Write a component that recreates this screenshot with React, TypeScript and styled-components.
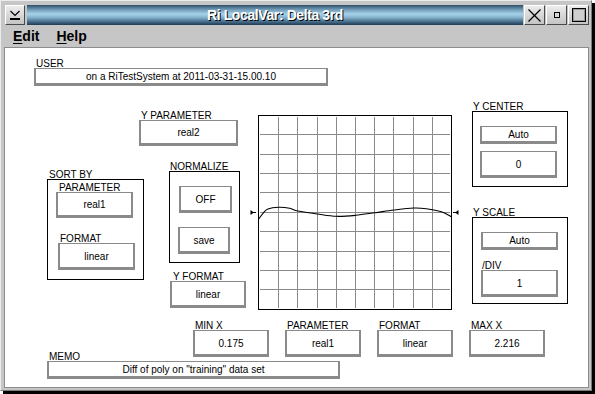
import React from "react";
import styled, { createGlobalStyle } from "styled-components";

const GlobalStyle = createGlobalStyle`
  html, body { margin: 0; padding: 0; background: #ffffff; }
  body { font-family: "Liberation Sans", Arial, sans-serif; color: #000; }
  #root { width: 595px; height: 394px; overflow: hidden; }
`;

const Window = styled.div`
  box-sizing: border-box;
  width: 592px;
  height: 391px;
  display: flex;
  flex-direction: column;
  background: #c6c6c6;
  border-top: 1px solid #ececec;
  border-left: 1px solid #ececec;
  border-right: 1px solid #7a7a7a;
  border-bottom: 1px solid #7a7a7a;
  padding: 4px 2px 2px 3px;
  box-shadow: 3px 3px 0 #000;
`;

const TitleRow = styled.div`
  display: flex;
  height: 20px;
  padding-left: 1px;
  flex: none;
`;

const WinButton = styled.div<{ $w: number }>`
  box-sizing: border-box;
  width: ${(p) => p.$w}px;
  height: 20px;
  flex: none;
  display: flex;
  align-items: center;
  justify-content: center;
  background: linear-gradient(#ececec, #c4c4c4);
  border: 1px solid;
  border-color: #ffffff #4a4a4a #4a4a4a #ffffff;
`;

const WinButtons = styled.div`
  display: flex;
  gap: 1px;
  margin-left: 1px;
`;

const TitleBar = styled.div`
  flex: 1;
  margin-left: 2px;
  height: 20px;
  display: flex;
  align-items: center;
  justify-content: center;
  background: linear-gradient(
    to bottom,
    #2e4e66 0%,
    #6e98b4 22%,
    #a6d2ea 45%,
    #86b2cc 62%,
    #4a7290 82%,
    #1e3a52 100%
  );
  color: #ffffff;
  font-weight: bold;
  font-size: 14px;
  letter-spacing: -0.4px;
  text-shadow: 1px 1px 0 #000;
  white-space: nowrap;
`;

const MenuBar = styled.div`
  height: 22px;
  flex: none;
  display: flex;
  align-items: center;
  padding-left: 9px;
  gap: 17px;
`;

const MenuItem = styled.span`
  font-weight: bold;
  font-size: 14px;
  line-height: 22px;
  u {
    text-decoration: underline;
    text-underline-offset: 2px;
    text-decoration-thickness: 1px;
  }
`;

const Content = styled.div`
  flex: 1;
  min-height: 0;
  background: #ffffff;
  border: 1px solid #8c8c8c;
  display: flex;
  flex-direction: column;
  align-items: flex-start;
  overflow: hidden;
`;

const Stack = styled.div<{ $mt?: number; $ml?: number; $w?: number }>`
  display: flex;
  flex-direction: column;
  align-items: flex-start;
  flex: none;
  margin-top: ${(p) => p.$mt ?? 0}px;
  margin-left: ${(p) => p.$ml ?? 0}px;
  ${(p) => (p.$w ? `width: ${p.$w}px;` : "")}
`;

const Label = styled.div<{ $indent?: number }>`
  font-size: 10px;
  line-height: 9px;
  height: 9px;
  padding-left: ${(p) => p.$indent ?? 2}px;
  white-space: nowrap;
`;

const ValueBox = styled.div<{ $w: number; $h?: number; $mt?: number; $ml?: number }>`
  box-sizing: border-box;
  flex: none;
  width: ${(p) => p.$w}px;
  height: ${(p) => p.$h ?? 27}px;
  margin-top: ${(p) => p.$mt ?? 0}px;
  margin-left: ${(p) => p.$ml ?? 0}px;
  background: #ffffff;
  border-style: solid;
  border-color: #8a8a8a;
  border-width: 1px 2px 3px 2px;
  display: flex;
  align-items: center;
  justify-content: center;
  padding-top: 2px;
  font-size: 10px;
  line-height: 10px;
  white-space: nowrap;
`;

const GroupBox = styled.div<{ $w: number; $h: number; $pt: number }>`
  box-sizing: border-box;
  width: ${(p) => p.$w}px;
  height: ${(p) => p.$h}px;
  border: 1px solid #000;
  padding-top: ${(p) => p.$pt}px;
  display: flex;
  flex-direction: column;
  align-items: flex-start;
`;

const MainRow = styled.div`
  display: flex;
  align-items: flex-start;
  margin-top: 16px;
  padding-left: 42px;
`;

const GraphWrap = styled.div`
  display: flex;
  align-items: center;
  margin-left: 4px;
  margin-top: 13px;
  flex: none;
`;

const Marker = styled.svg<{ $side: "left" | "right" }>`
  display: block;
  flex: none;
  ${(p) => (p.$side === "left" ? "margin-right: 2px;" : "margin-left: 1px;")}
`;

const BottomRow = styled.div`
  display: flex;
  gap: 16px;
  margin-top: 11px;
  margin-left: 188px;
`;

type FieldProps = {
  label: string;
  value: string;
  w: number;
  h?: number;
  mt?: number;
  ml?: number;
  indent?: number;
};

function Field({ label, value, w, h, mt, ml, indent }: FieldProps) {
  return (
    <Stack $mt={mt} $ml={ml}>
      <Label $indent={indent}>{label}</Label>
      <ValueBox $w={w} $h={h}>
        {value}
      </ValueBox>
    </Stack>
  );
}

const curvePts: [number, number][] = [
  [0, 105],
  [5, 98.3],
  [10, 94],
  [20.7, 92.3],
  [31.7, 93.3],
  [40, 96],
  [59.4, 99],
  [78.4, 101.3],
  [97.7, 100.3],
  [117, 97.7],
  [136, 95],
  [155.4, 93],
  [168.4, 93.7],
  [183.4, 96.7],
  [193.5, 101.7],
];

function smoothPath(pts: [number, number][]) {
  let d = `M${pts[0][0]},${pts[0][1]}`;
  for (let i = 0; i < pts.length - 1; i++) {
    const p0 = pts[i - 1] || pts[i];
    const p1 = pts[i];
    const p2 = pts[i + 1];
    const p3 = pts[i + 2] || p2;
    const c1x = p1[0] + (p2[0] - p0[0]) / 6;
    const c1y = p1[1] + (p2[1] - p0[1]) / 6;
    const c2x = p2[0] - (p3[0] - p1[0]) / 6;
    const c2y = p2[1] - (p3[1] - p1[1]) / 6;
    d += ` C${c1x.toFixed(2)},${c1y.toFixed(2)} ${c2x.toFixed(2)},${c2y.toFixed(2)} ${p2[0]},${p2[1]}`;
  }
  return d;
}

const vLines = [20, 39, 59, 78, 97, 116, 135, 155, 174];
const hLines = [19, 39, 58, 77, 97, 116, 136, 155, 174];

function Graph() {
  return (
    <svg width={194} height={195} style={{ display: "block", flex: "none" }}>
      <rect x={0} y={0} width={194} height={195} fill="#fff" />
      <g stroke="#8a8a8a" strokeWidth={1} shapeRendering="crispEdges">
        {vLines.map((x) => (
          <line key={"v" + x} x1={x + 0.5} y1={2} x2={x + 0.5} y2={193} />
        ))}
        {hLines.map((y) => (
          <line key={"h" + y} x1={2} y1={y + 0.5} x2={192} y2={y + 0.5} />
        ))}
      </g>
      <rect
        x={0.5}
        y={0.5}
        width={193}
        height={194}
        fill="none"
        stroke="#000"
        strokeWidth={1}
        shapeRendering="crispEdges"
      />
      <path d={smoothPath(curvePts)} fill="none" stroke="#000" strokeWidth={1.1} />
    </svg>
  );
}

function LeftMarker() {
  return (
    <Marker $side="left" width={6} height={7} viewBox="0 0 6 7">
      <polygon points="0.5,1 4,3.5 0.5,6" fill="#000" />
      <line x1={3} y1={3.5} x2={6} y2={3.5} stroke="#000" strokeWidth={1} />
    </Marker>
  );
}

function RightMarker() {
  return (
    <Marker $side="right" width={6} height={7} viewBox="0 0 6 7">
      <polygon points="5.5,1 2,3.5 5.5,6" fill="#000" />
      <line x1={0} y1={3.5} x2={3} y2={3.5} stroke="#000" strokeWidth={1} />
    </Marker>
  );
}

export default function App() {
  return (
    <>
      <GlobalStyle />
      <Window>
        <TitleRow>
          <WinButton $w={20}>
            <svg width={14} height={14} viewBox="0 0 14 14">
              <polyline points="2.5,3 7,7.5 11.5,3" fill="none" stroke="#000" strokeWidth={1.2} />
              <rect x={2} y={10} width={10} height={2} fill="#000" />
            </svg>
          </WinButton>
          <TitleBar>Ri LocalVar: Delta 3rd</TitleBar>
          <WinButtons>
            <WinButton $w={21}>
              <svg width={13} height={13} viewBox="0 0 13 13">
                <line x1={0.5} y1={0.5} x2={12.5} y2={12.5} stroke="#000" strokeWidth={1.2} />
                <line x1={12.5} y1={0.5} x2={0.5} y2={12.5} stroke="#000" strokeWidth={1.2} />
              </svg>
            </WinButton>
            <WinButton $w={21}>
              <svg width={6} height={6} viewBox="0 0 6 6">
                <rect x={0.5} y={0.5} width={5} height={5} fill="#d8d8d8" stroke="#000" strokeWidth={1} />
              </svg>
            </WinButton>
            <WinButton $w={21}>
              <svg width={14} height={14} viewBox="0 0 14 14">
                <rect x={0.5} y={0.5} width={13} height={13} fill="#d0d0d0" stroke="#000" strokeWidth={1} />
                <rect x={1.5} y={1.5} width={11} height={11} fill="none" stroke="#9a9a9a" strokeWidth={1} />
              </svg>
            </WinButton>
          </WinButtons>
        </TitleRow>
        <MenuBar>
          <MenuItem>
            <u>E</u>dit
          </MenuItem>
          <MenuItem>
            <u>H</u>elp
          </MenuItem>
        </MenuBar>
        <Content>
          <Field
            label="USER"
            value="on a RiTestSystem at 2011-03-31-15.00.10"
            w={294}
            h={18}
            mt={11}
            ml={29}
          />
          <MainRow>
            <Stack $mt={68} $w={97}>
              <Label $indent={2}>SORT BY</Label>
              <GroupBox $w={97} $h={101} $pt={3}>
                <Field label="PARAMETER" value="real1" w={77} h={26} ml={8} indent={3} />
                <Field label="FORMAT" value="linear" w={77} mt={16} ml={10} indent={2} />
              </GroupBox>
            </Stack>
            <Stack $ml={25} $w={77}>
              <Field label="Y PARAMETER" value="real2" w={99} h={26} mt={9} ml={-30} />
              <Stack $mt={16}>
                <Label $indent={1}>NORMALIZE</Label>
                <GroupBox $w={71} $h={92} $pt={14}>
                  <ValueBox $w={53} $ml={9}>
                    OFF
                  </ValueBox>
                  <ValueBox $w={52} $mt={14} $ml={8}>
                    save
                  </ValueBox>
                </GroupBox>
              </Stack>
              <Field label="Y FORMAT" value="linear" w={76} mt={9} ml={1} indent={3} />
            </Stack>
            <GraphWrap>
              <LeftMarker />
              <Graph />
              <RightMarker />
            </GraphWrap>
            <Stack $ml={13} $w={97}>
              <Label $indent={1}>Y CENTER</Label>
              <GroupBox $w={96} $h={76} $pt={14}>
                <ValueBox $w={77} $h={18} $ml={7}>
                  Auto
                </ValueBox>
                <ValueBox $w={77} $mt={7} $ml={7}>
                  0
                </ValueBox>
              </GroupBox>
              <Stack $mt={21}>
                <Label $indent={1}>Y SCALE</Label>
                <GroupBox $w={96} $h={87} $pt={14}>
                  <ValueBox $w={77} $h={18} $ml={8}>
                    Auto
                  </ValueBox>
                  <Field label="/DIV" value="1" w={77} mt={11} ml={8} indent={1} />
                </GroupBox>
              </Stack>
            </Stack>
          </MainRow>
          <BottomRow>
            <Field label="MIN X" value="0.175" w={76} />
            <Field label="PARAMETER" value="real1" w={76} />
            <Field label="FORMAT" value="linear" w={76} />
            <Field label="MAX X" value="2.216" w={76} />
          </BottomRow>
          <Field
            label="MEMO"
            value={'Diff of poly on "training" data set'}
            w={293}
            h={18}
            mt={-5}
            ml={42}
          />
        </Content>
      </Window>
    </>
  );
}
